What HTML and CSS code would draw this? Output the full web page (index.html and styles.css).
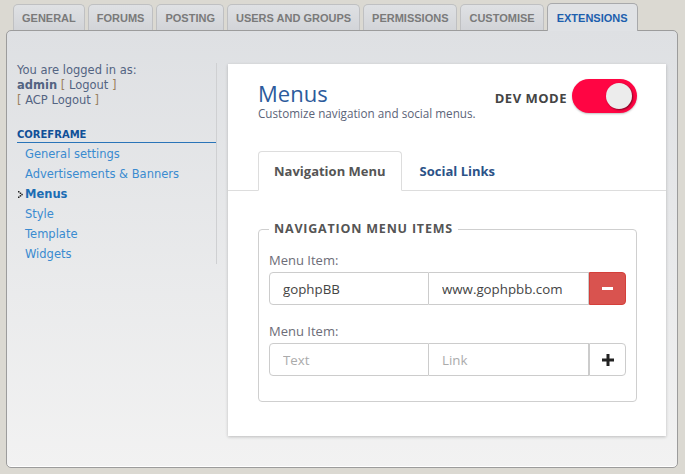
FILE: index.html
```html
<!DOCTYPE html>
<html>
<head>
<meta charset="utf-8">
<link rel="stylesheet" href="styles.css">
</head>
<body>
<nav class="tabs">
  <a class="tab">GENERAL</a>
  <a class="tab">FORUMS</a>
  <a class="tab">POSTING</a>
  <a class="tab">USERS AND GROUPS</a>
  <a class="tab">PERMISSIONS</a>
  <a class="tab">CUSTOMISE</a>
  <a class="tab tab-active">EXTENSIONS</a>
</nav>
<div class="panel">
  <aside class="side">
    <div class="login">
      <div>You are logged in as:</div>
      <div><b>admin</b> <span class="br">[</span> Logout <span class="br">]</span></div>
      <div><span class="br">[</span> ACP Logout <span class="br">]</span></div>
    </div>
    <div class="section">COREFRAME</div>
    <ul class="menu">
      <li>General settings</li>
      <li>Advertisements &amp; Banners</li>
      <li class="current"><svg class="arrow" width="5" height="7" viewBox="0 0 5 7"><rect x="0" y="0" width="1.5" height="1.5" fill="#222"/><rect x="1.7" y="1.5" width="1.5" height="1.5" fill="#222"/><rect x="3.3" y="2.8" width="1.5" height="1.5" fill="#222"/><rect x="1.7" y="4.1" width="1.5" height="1.5" fill="#222"/><rect x="0" y="5.5" width="1.5" height="1.5" fill="#222"/></svg>Menus</li>
      <li>Style</li>
      <li>Template</li>
      <li>Widgets</li>
    </ul>
  </aside>
  <main class="card">
    <header class="head">
      <div class="titles">
        <h1 class="title">Menus</h1>
        <p class="sub">Customize navigation and social menus.</p>
      </div>
      <div class="dev">
        <span class="dev-label">DEV MODE</span>
        <span class="switch"><span class="knob"></span></span>
      </div>
    </header>
    <div class="navtabs">
      <span class="navtab navtab-active">Navigation Menu</span>
      <span class="navtab">Social Links</span>
    </div>
    <fieldset class="box">
      <legend class="legend">NAVIGATION MENU ITEMS</legend>
      <label class="lbl">Menu Item:</label>
      <div class="group">
        <input class="inp" type="text" value="gophpBB">
        <input class="inp" type="text" value="www.gophpbb.com">
        <button class="btn btn-del"><span class="minus"></span></button>
      </div>
      <label class="lbl lbl2">Menu Item:</label>
      <div class="group">
        <input class="inp" type="text" placeholder="Text">
        <input class="inp" type="text" placeholder="Link">
        <button class="btn btn-add"><svg width="12" height="12" viewBox="0 0 12 12"><rect x="4.5" y="0" width="3" height="12" fill="#222"/><rect x="0" y="4.5" width="12" height="3" fill="#222"/></svg></button>
      </div>
    </fieldset>
  </main>
</div>
</body>
</html>
```

FILE: styles.css
```css
* { box-sizing: border-box; }
html, body { margin: 0; }
body {
  background: #dbd9d2;
  padding-top: 3px;
  height: 474px;
  overflow: hidden;
}
.tabs {
  display: flex;
  align-items: flex-end;
  gap: 3px;
  padding-left: 13px;
  position: relative;
  z-index: 2;
}
.tab {
  display: block;
  height: 26px;
  padding: 0 8px;
  font: bold 11px "Liberation Sans", Arial, sans-serif;
  line-height: 26px;
  color: #7a7a7a;
  background: linear-gradient(#dfe1e4, #d2d4d8);
  border: 1px solid #bfc0c2;
  border-bottom: none;
  border-radius: 5px 5px 0 0;
}
.tab-active {
  height: 28px;
  line-height: 28px;
  margin-bottom: -1px;
  color: #1d5fae;
  background: #e0e2e5;
  border-color: #a8a9ab;
  padding: 0 9px;
}
.panel {
  margin: 0 7px 0 6px;
  height: 438px;
  border: 1px solid #9c9c9c;
  border-radius: 5px;
  background: linear-gradient(#dee0e3, #f2f2f2);
  display: flex;
  align-items: flex-start;
  padding: 32px 11px 0 10px;
  box-shadow: inset 0 -1px 0 #fff;
}
.side {
  width: 200px;
  flex: none;
  border-right: 1px solid #cfd0d2;
  font: 11.5px "DejaVu Sans", Verdana, sans-serif;
  color: #536482;
}
.login { line-height: 15px; }
.login b { font-weight: bold; }
.br { color: #9a8060; }
.section {
  margin-top: 20px;
  font-weight: bold;
  font-size: 10px;
  line-height: 14px;
  color: #115098;
  border-bottom: 1px solid #2a74b8;
}
.menu {
  list-style: none;
  margin: 0;
  padding: 1px 0 0 8px;
}
.menu li {
  line-height: 20px;
  color: #3a8bd0;
  position: relative;
}
.menu li.current { font-weight: bold; color: #1c6db4; }
.arrow {
  position: absolute;
  left: -7px;
  top: 7px;
}
.card {
  width: 438px;
  flex: none;
  margin: 1px 0 0 11px;
  height: 372px;
  background: #fff;
  box-shadow: 0 1px 3px rgba(0,0,0,.22);
  padding: 16px 29px 0 30px;
  font-family: "Open Sans", sans-serif;
}
.head {
  display: flex;
  justify-content: space-between;
  align-items: flex-start;
}
.title {
  margin: 0;
  font-weight: 400;
  font-size: 22px;
  line-height: 26px;
  color: #2c5b9c;
}
.sub {
  margin: 0;
  font-size: 11.7px;
  line-height: 15px;
  color: #5c6478;
}
.dev {
  display: flex;
  align-items: center;
  gap: 5px;
  margin-top: -1px;
}
.dev-label {
  font-weight: 700;
  font-size: 13px;
  letter-spacing: 0.5px;
  color: #444;
  margin-top: 3px;
}
.switch {
  width: 65px;
  height: 34px;
  border-radius: 17px;
  background: #ff0543;
  display: flex;
  align-items: center;
  justify-content: flex-end;
  padding-right: 5px;
  box-shadow: 0 1px 2px rgba(0,0,0,.25);
}
.knob {
  width: 26px;
  height: 26px;
  border-radius: 50%;
  background: #ececec;
  box-shadow: 1px 1px 2px rgba(0,0,0,.5);
}
.navtabs {
  display: flex;
  margin: 30px -29px 0 -30px;
  padding-left: 30px;
  border-bottom: 1px solid #dddddd;
}
.navtab {
  height: 40px;
  line-height: 39px;
  padding: 0 15px;
  font-weight: 700;
  font-size: 13px;
  color: #2b5287;
  border: 1px solid transparent;
  border-radius: 4px 4px 0 0;
  margin-bottom: -1px;
  margin-right: 2px;
}
.navtab-active {
  color: #555;
  border-color: #dddddd;
  border-bottom-color: #fff;
  background: #fff;
}
.box {
  margin: 29px 0 0 0;
  border: 1px solid #cfcfcf;
  border-radius: 4px;
  padding: 13px 10px 25px 10px;
  min-width: 0;
}
.legend {
  padding: 0 5px;
  font-weight: 700;
  font-size: 12.5px;
  line-height: 18px;
  letter-spacing: 0.8px;
  color: #555;
}
.lbl {
  display: block;
  font-size: 13px;
  line-height: 18px;
  color: #6d6d78;
  margin-bottom: 3px;
}
.lbl2 { margin-top: 17px; }
.group {
  display: flex;
  height: 33px;
}
.inp {
  width: 160px;
  height: 33px;
  border: 1px solid #cccccc;
  margin: 0;
  padding: 0 13px;
  font: 13.3px "Open Sans", sans-serif;
  color: #444;
  background: #fff;
  outline: none;
}
.inp::placeholder { color: #ababab; }
.inp:first-child { border-radius: 4px 0 0 4px; }
.inp + .inp { border-left: none; }
.btn {
  width: 37px;
  height: 33px;
  margin: 0;
  padding: 0;
  border-radius: 0 4px 4px 0;
  display: flex;
  align-items: center;
  justify-content: center;
}
.btn-del {
  background: #d9534f;
  border: 1px solid #d43f3a;
}
.minus {
  width: 11px;
  height: 3px;
  background: #fff;
}
.btn-add {
  background: #fff;
  border: 1px solid #cccccc;
}
```
